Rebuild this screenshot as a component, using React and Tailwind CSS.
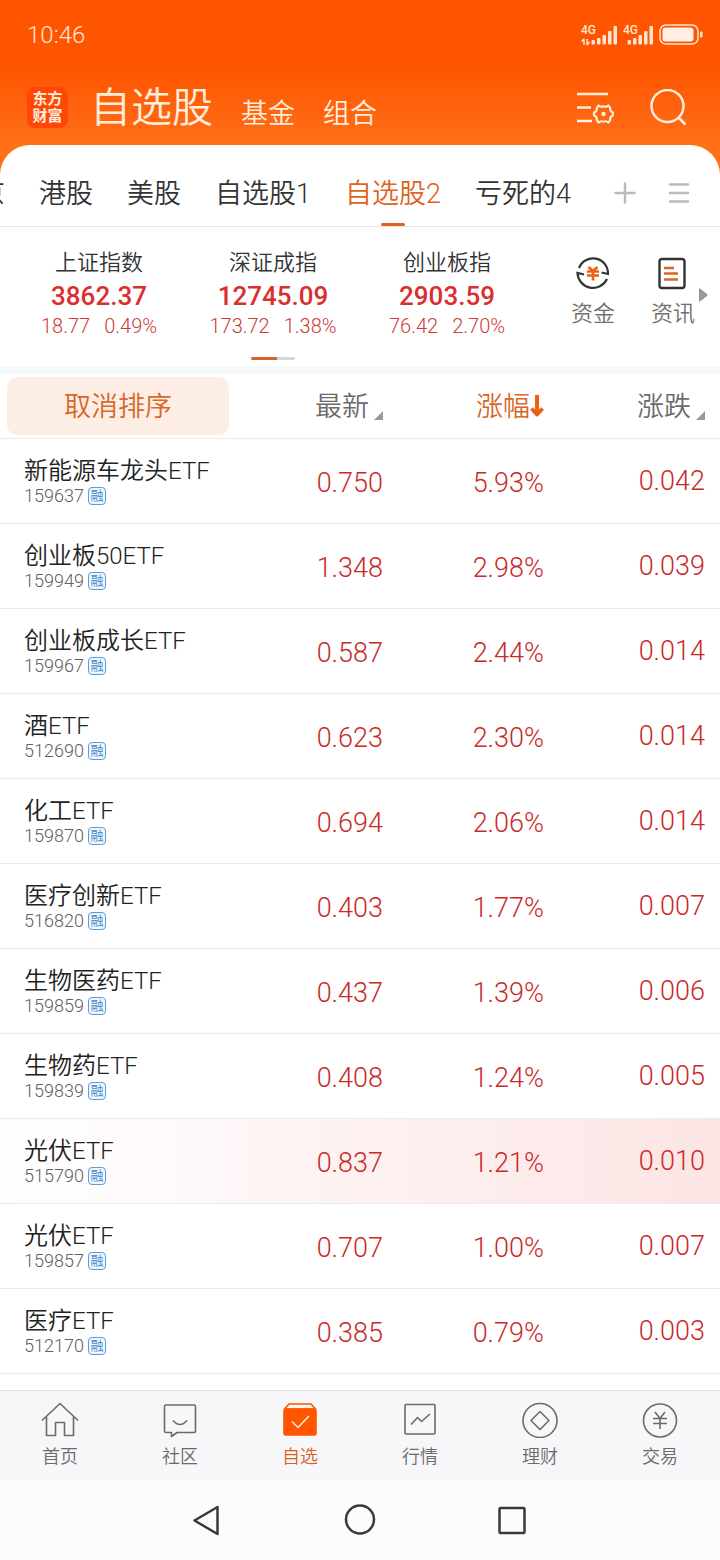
// src/App.jsx

const TABS = ['京', '港股', '美股', '自选股1', '自选股2', '亏死的4'];
const ACTIVE_TAB = '自选股2';

const INDICES = [
  { name: '上证指数', value: '3862.37', change: '18.77', rate: '0.49%' },
  { name: '深证成指', value: '12745.09', change: '173.72', rate: '1.38%' },
  { name: '创业板指', value: '2903.59', change: '76.42', rate: '2.70%' },
];

const STOCKS = [
  { name: '新能源车龙头ETF', code: '159637', price: '0.750', rate: '5.93%', change: '0.042' },
  { name: '创业板50ETF', code: '159949', price: '1.348', rate: '2.98%', change: '0.039' },
  { name: '创业板成长ETF', code: '159967', price: '0.587', rate: '2.44%', change: '0.014' },
  { name: '酒ETF', code: '512690', price: '0.623', rate: '2.30%', change: '0.014' },
  { name: '化工ETF', code: '159870', price: '0.694', rate: '2.06%', change: '0.014' },
  { name: '医疗创新ETF', code: '516820', price: '0.403', rate: '1.77%', change: '0.007' },
  { name: '生物医药ETF', code: '159859', price: '0.437', rate: '1.39%', change: '0.006' },
  { name: '生物药ETF', code: '159839', price: '0.408', rate: '1.24%', change: '0.005' },
  { name: '光伏ETF', code: '515790', price: '0.837', rate: '1.21%', change: '0.010', flash: true },
  { name: '光伏ETF', code: '159857', price: '0.707', rate: '1.00%', change: '0.007' },
  { name: '医疗ETF', code: '512170', price: '0.385', rate: '0.79%', change: '0.003' },
];

// 状态栏信号
function Signal({ data }) {
  return (
    <svg width={data ? 36 : 30} height="22" viewBox={data ? '0 0 36 22' : '6 0 30 22'} fill="currentColor">
      <text x={data ? 0 : 6} y="10" fontSize="12" fontWeight="500">4G</text>
      {data && <path d="M3 15v6M3 15l-2.500 2.500M6 21v-6M6 21l2.500-3" stroke="currentColor" strokeWidth="1.500" fill="none" />}
      {data && <rect x="10.500" y="16" width="3.500" height="4.500" rx="1" />}
      <rect x={data ? 16 : 10.5} y={data ? 14 : 16} width="3.500" height={data ? 6.5 : 4.5} rx="1" />
      <rect x={data ? 21.5 : 16} y={data ? 11 : 14} width="3.500" height={data ? 9.5 : 6.5} rx="1" />
      <rect x={data ? 27 : 21.5} y={data ? 7 : 11} width="3.500" height={data ? 13.5 : 9.5} rx="1" />
      {!data && <rect x="27" y="7" width="3.500" height="13.500" rx="1" />}
      <rect x="32.500" y="2" width="3.500" height="18.500" rx="1" />
    </svg>
  );
}

function StatusBar() {
  return (
    <div className="flex h-[70px] items-center justify-between pl-[27px] pr-[17px] text-[#ffe6d3]">
      <span className="text-2xl">10:46</span>
      <div className="flex items-center gap-[6px]">
        <Signal data />
        <Signal />
        <svg width="44" height="22" viewBox="0 0 44 22" fill="none">
          <rect x="1" y="1" width="38" height="19" rx="6" stroke="currentColor" strokeWidth="1.500" />
          <rect x="3.500" y="3.500" width="31" height="14" rx="3" fill="#ffefe6" />
          <rect x="41" y="7.500" width="2.500" height="6" rx="1" fill="currentColor" />
        </svg>
      </div>
    </div>
  );
}

function Header() {
  return (
    <header className="bg-linear-to-b from-[#ff5500] from-40% to-[#ff7019] to-85% pb-[30px]">
      <StatusBar />
      <div className="flex h-[75px] items-center pl-[27px] pr-[33px] text-[#ffeeda]">
        <div className="mr-[22px] flex size-[41px] flex-col items-center justify-center rounded-lg bg-[#ff4808] text-[15px] leading-[17px] font-bold">
          <span>东方</span>
          <span>财富</span>
        </div>
        <nav className="flex flex-1 items-end gap-7">
          <button className="text-[41px] leading-10">自选股</button>
          <button className="text-[27px] leading-7">基金</button>
          <button className="text-[27px] leading-7">组合</button>
        </nav>
        <div className="flex items-center gap-9">
          <button aria-label="设置">
            <svg width="38" height="34" viewBox="0 0 38 34" fill="none" stroke="currentColor" strokeWidth="2.500">
              <path d="M1 3h31M1 16.500h14M1 30h15" />
              <path
                d="M22.500 14.500q2.500 2 5 .8 2.500 1.200 5-.8l1.700 2.500q-.5 3 2.800 4.700v2.600q-3.300 1.700-2.800 4.700l-1.700 2.500q-2.500-2-5-.8-2.500-1.200-5 .8L20.800 29q.5-3-2.800-4.700v-2.600q3.300-1.700 2.800-4.700z"
                strokeLinejoin="round"
                strokeWidth="2.200"
              />
              <circle cx="27.500" cy="23" r="2.200" fill="currentColor" stroke="none" />
            </svg>
          </button>
          <button aria-label="搜索">
            <svg width="37" height="38" viewBox="0 0 37 38" fill="none" stroke="currentColor" strokeWidth="2.500">
              <circle cx="17.500" cy="17" r="16" />
              <path d="M28.500 28.500l7 7" />
            </svg>
          </button>
        </div>
      </div>
    </header>
  );
}

function TabBar() {
  return (
    <div className="flex h-[82px] items-stretch border-b border-[#e6e6e6]">
      <div className="flex min-w-0 flex-1 overflow-hidden">
        <div className="-ml-[22px] flex gap-[34px] text-[27px] whitespace-nowrap text-[#333]">
          {TABS.map(tab => (
            <button key={tab} className={`relative pt-[18px] ${tab === ACTIVE_TAB ? 'text-[#e0621c]' : ''}`}>
              {tab}
              {tab === ACTIVE_TAB && (
                <span className="absolute bottom-0 left-1/2 h-[3px] w-6 -translate-x-1/2 rounded-full bg-[#de6220]"></span>
              )}
            </button>
          ))}
        </div>
      </div>
      <div className="flex items-center gap-8 pt-[14px] pr-[30px] text-[#bbb]">
        <button aria-label="添加">
          <svg width="22" height="22" viewBox="0 0 22 22" stroke="currentColor" strokeWidth="2.500">
            <path d="M1.500 11h19M11 1.500v19" strokeLinecap="round" />
          </svg>
        </button>
        <button aria-label="分组">
          <svg width="22" height="22" viewBox="0 0 22 22" stroke="currentColor" strokeWidth="2.500">
            <path d="M2 2.500h18M2 11h18M2 19.500h18" strokeLinecap="round" />
          </svg>
        </button>
      </div>
    </div>
  );
}

function IndexPanel() {
  return (
    <section className="flex h-[140px] pl-3">
      <div className="relative grid flex-1 grid-cols-3 pt-[21px] text-center">
        {INDICES.map(item => (
          <div key={item.name} className="flex flex-col">
            <span className="text-[22px] leading-[30px] text-[#333]">{item.name}</span>
            <span className="text-[26px] leading-9 font-medium text-[#d9302f]">{item.value}</span>
            <span className="flex justify-center gap-[14px] text-xl leading-6 text-[#cc3c38]">
              <span>{item.change}</span>
              <span>{item.rate}</span>
            </span>
          </div>
        ))}
        {/* 翻页指示 */}
        <div className="absolute bottom-[7px] left-1/2 flex h-[3px] w-11 -translate-x-1/2 overflow-hidden rounded-full bg-[#d3d6da]">
          <span className="w-[26px] bg-[#d4642a]"></span>
        </div>
      </div>
      <div className="flex w-[186px] items-start pl-[19px] pt-[29px] text-[22px] leading-[30px] text-[#707070]">
        <button className="flex w-20 flex-col items-center gap-[9px]">
          <svg width="34" height="34" viewBox="0 0 34 34" fill="none" stroke="#333" strokeWidth="2.200">
            <path d="M3 12A15 15 0 0 1 32 18l-6.500-1.500" />
            <path d="M31 23A15.500 15.500 0 0 1 1.500 17l6.500 1.500" />
            <path d="M12.500 11l4.500 4 4.500-4M11 15.500h12M11 19.500h12M17 15v9.500" stroke="#ea6114" strokeWidth="2.600" />
          </svg>
          资金
        </button>
        <button className="flex w-20 flex-col items-center gap-[9px]">
          <svg width="34" height="34" viewBox="0 0 34 34" fill="none" stroke="#333" strokeWidth="2.400">
            <rect x="3.500" y="3" width="25" height="29" rx="2.500" />
            <path d="M8 12h10M8 17.500h14M8 23.500h14" stroke="#dc6427" />
          </svg>
          资讯
        </button>
        <svg className="-ml-[14px] mt-8 shrink-0" width="9" height="14" viewBox="0 0 9 14">
          <path d="M0 1q0-1 1-.5l7 5.500q1 1 0 2l-7 5.500q-1 .5-1-.5z" fill="#999" />
        </svg>
      </div>
    </section>
  );
}

function SortMark() {
  return (
    <svg className="mb-[7px] ml-[5px]" width="9" height="9" viewBox="0 0 9 9">
      <path d="M9 0v9H0z" fill="#999" />
    </svg>
  );
}

function StockTable() {
  return (
    <table className="w-full table-fixed">
      <thead>
        <tr className="h-16 border-b border-[#ececec] text-[27px] leading-10 text-[#6b6b6b]">
          <th className="w-[229px] p-0 pl-[7px] font-[350]">
            <button className="block h-[58px] w-full rounded-[10px] bg-[#fdeee5] pt-[2px] text-[#d9662a]">取消排序</button>
          </th>
          <th className="pt-[2px] font-[350]">
            <button className="flex w-full items-end justify-end">最新<SortMark /></button>
          </th>
          <th className="w-[161px] pt-[2px] font-[350]">
            <button className="flex w-full items-center justify-end text-[#d9662a]">
              涨幅
              <svg width="14" height="24" viewBox="0 0 14 24" fill="none" stroke="#ec6013" strokeWidth="4">
                <path d="M7 0v20M1.500 13.500l5.500 6 5.500-6" strokeLinejoin="round" />
              </svg>
            </button>
          </th>
          <th className="w-44 pt-[2px] pr-[15px] font-[350]">
            <button className="flex w-full items-end justify-end">涨跌<SortMark /></button>
          </th>
        </tr>
      </thead>
      <tbody>
        {STOCKS.map(stock => (
          <tr
            key={stock.code}
            className={`h-[85px] border-b border-[#ececec] text-right text-[27px] text-[#c92a28] ${stock.flash ? 'bg-linear-to-r from-white to-[#fce4e4]' : ''}`}
          >
            <td className="pl-6 text-left">
              <div className="text-2xl leading-[30px] whitespace-nowrap text-[#222]">{stock.name}</div>
              <div className="flex items-center gap-1 text-lg leading-5 text-[#606060]">
                {stock.code}
                <span className="flex size-[18px] items-center justify-center rounded-sm border border-[#5c9cd6] bg-[#f0f8ff] text-[13px] leading-none text-[#3f86c8]">融</span>
              </div>
            </td>
            <td className="pt-[6px]">{stock.price}</td>
            <td className="pt-[6px]">{stock.rate}</td>
            <td className="pt-[2px] pr-[15px]">{stock.change}</td>
          </tr>
        ))}
      </tbody>
    </table>
  );
}

const NAV_ITEMS = [
  {
    label: '首页',
    icon: <path d="M1 18.500L19 1.500l18 17M5.500 15v18.500h9V20.500h9v13h9V15" />,
  },
  {
    label: '社区',
    icon: (
      <>
        <path d="M5 3h28q1.500 0 1.500 2v24q0 1.500-2 1.500H16l-5.500 4V30.500H5q-1.500 0-1.500-2V5Q3.500 3 5 3z" />
        <path d="M12 18.500q7 8 14 0" />
      </>
    ),
  },
  {
    label: '自选',
    active: true,
    icon: (
      <>
        <path d="M3.500 7L8 2h22l4.500 5z" fill="#fff2ea" />
        <rect x="3" y="7" width="32" height="26" rx="2" fill="#ff5500" stroke="#ff5500" />
        <path d="M11 19.500l6 6 11-11.500" stroke="#ffe9da" />
      </>
    ),
  },
  {
    label: '行情',
    icon: (
      <>
        <rect x="4" y="2.500" width="30" height="29.500" rx="1" />
        <path d="M10 22.500l6.500-7 4 4L29 12" />
      </>
    ),
  },
  {
    label: '理财',
    icon: (
      <>
        <circle cx="19" cy="18.500" r="17" />
        <path d="M19 9.500l9 9-9 9-9-9z" />
      </>
    ),
  },
  {
    label: '交易',
    icon: (
      <>
        <circle cx="19" cy="18.500" r="16.500" />
        <path d="M14 10l5 6.500 5-6.500M12 16.500h14M12 21.500h14M19 16.500V27" />
      </>
    ),
  },
];

function BottomNav() {
  return (
    <nav className="grid h-[89px] grid-cols-6 border-t border-[#e2e2e2] bg-[#f7f7fa]">
      {NAV_ITEMS.map(item => (
        <button
          key={item.label}
          className={`flex flex-col items-center pt-[11px] text-lg leading-[26px] ${item.active ? 'text-[#d9601f]' : 'text-[#6b6b6b]'}`}
        >
          <svg width="38" height="36" viewBox="0 0 38 36" fill="none" stroke={item.active ? '#ff5500' : 'currentColor'} strokeWidth="1.600" strokeLinejoin="round">
            {item.icon}
          </svg>
          <span className="mt-[6px]">{item.label}</span>
        </button>
      ))}
    </nav>
  );
}

function SystemBar() {
  return (
    <div className="flex h-[81px] items-center justify-center gap-[120px] bg-[#fcfcfc] text-[#3a3a3a]">
      <button aria-label="返回">
        <svg width="32" height="32" viewBox="0 0 32 32" fill="none" stroke="currentColor" strokeWidth="2.500" strokeLinejoin="round">
          <path d="M2.500 16.500L25.500 3v27z" />
        </svg>
      </button>
      <button aria-label="主屏幕">
        <svg width="32" height="32" viewBox="0 0 32 32" fill="none" stroke="currentColor" strokeWidth="2.500">
          <circle cx="16" cy="15.500" r="14" />
        </svg>
      </button>
      <button aria-label="最近任务">
        <svg width="32" height="32" viewBox="0 0 32 32" fill="none" stroke="currentColor" strokeWidth="2.500">
          <rect x="3.500" y="4" width="25" height="25" rx="1" />
        </svg>
      </button>
    </div>
  );
}

function App() {
  return (
    <div className="flex min-h-screen flex-col bg-white font-[350] font-['Roboto','Noto_Sans_CJK_SC',sans-serif]">
      <Header />
      <main className="relative -mt-[30px] flex-1 rounded-t-[30px] bg-white pb-4">
        <TabBar />
        <IndexPanel />
        <div className="h-[7px] bg-[#f7f8fa]"></div>
        <StockTable />
      </main>
      <BottomNav />
      <SystemBar />
    </div>
  );
}

export default App;
